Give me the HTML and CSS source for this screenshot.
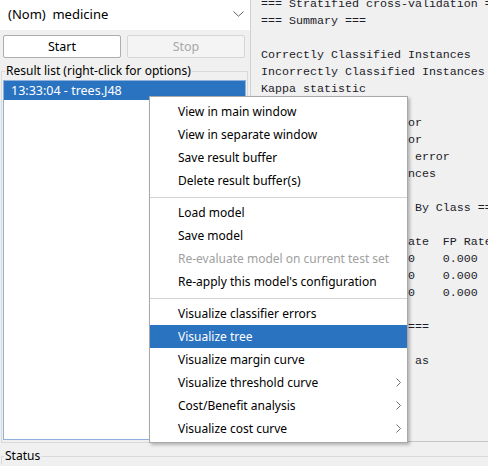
FILE: index.html
```html
<!DOCTYPE html>
<html>
<head>
<meta charset="utf-8">
<link rel="stylesheet" href="styles.css">
</head>
<body>
<div class="app">
  <div class="main">
    <div class="left">
      <div class="combo">
        <span class="combo-text">(Nom)&nbsp; medicine</span>
        <svg class="combo-arrow" width="11" height="6" viewBox="0 0 11 6"><path d="M0.5 0.5 L5.5 5.2 L10.5 0.5" fill="none" stroke="#606060" stroke-width="1"/></svg>
      </div>
      <div class="buttons">
        <button class="btn">Start</button>
        <button class="btn btn-disabled">Stop</button>
      </div>
      <fieldset class="group">
        <legend class="group-title">Result list (right-click for options)</legend>
        <div class="list">
          <div class="list-item list-item-sel">13:33:04 - trees.J48</div>
        </div>
      </fieldset>
    </div>
    <div class="right">
      <pre class="output">=== Stratified cross-validation ===
=== Summary ===

Correctly Classified Instances          22              100      %
Incorrectly Classified Instances         0                0      %
Kappa statistic                          1
Mean absolute error                      0
Root mean squared error                  0
Relative absolute error                  0      %
Root relative squared error              0      %
Total Number of Instances               22

=== Detailed Accuracy By Class ===

                 TP Rate  FP Rate  Precision  Recall   F-Measure
                 1.000    0.000    1.000      1.000    1.000
                 1.000    0.000    1.000      1.000    1.000
Weighted Avg.    1.000    0.000    1.000      1.000    1.000

=== Confusion Matrix ===

  a  b &lt;-- classified as
 12  0 |  a = yes
  0 10 |  b = no
</pre>
    </div>
  </div>
  <fieldset class="status">
    <legend class="status-title">Status</legend>
  </fieldset>

  <div class="menu">
    <div class="menu-item">View in main window</div>
    <div class="menu-item">View in separate window</div>
    <div class="menu-item">Save result buffer</div>
    <div class="menu-item">Delete result buffer(s)</div>
    <div class="menu-sep"></div>
    <div class="menu-item">Load model</div>
    <div class="menu-item">Save model</div>
    <div class="menu-item menu-item-disabled">Re-evaluate model on current test set</div>
    <div class="menu-item">Re-apply this model's configuration</div>
    <div class="menu-sep"></div>
    <div class="menu-item">Visualize classifier errors</div>
    <div class="menu-item menu-item-active">Visualize tree</div>
    <div class="menu-item">Visualize margin curve</div>
    <div class="menu-item">Visualize threshold curve<svg class="sub-arrow" width="5" height="9" viewBox="0 0 5 9"><path d="M0.5 0.5 L4.5 4.5 L0.5 8.5" fill="none" stroke="#707070" stroke-width="1"/></svg></div>
    <div class="menu-item">Cost/Benefit analysis<svg class="sub-arrow" width="5" height="9" viewBox="0 0 5 9"><path d="M0.5 0.5 L4.5 4.5 L0.5 8.5" fill="none" stroke="#707070" stroke-width="1"/></svg></div>
    <div class="menu-item">Visualize cost curve<svg class="sub-arrow" width="5" height="9" viewBox="0 0 5 9"><path d="M0.5 0.5 L4.5 4.5 L0.5 8.5" fill="none" stroke="#707070" stroke-width="1"/></svg></div>
  </div>
</div>
</body>
</html>
```
FILE: styles.css
```css
html, body {
  margin: 0;
  padding: 0;
  background: #f0f0f0;
  width: 488px;
  height: 466px;
  overflow: hidden;
}

.app {
  position: relative;
  width: 488px;
  height: 466px;
  overflow: hidden;
  font-family: "Noto Sans", "Liberation Sans", sans-serif;
  font-size: 12px;
  color: #000;
}

.main {
  display: flex;
  height: 443px;
}

.left {
  width: 250px;
  display: flex;
  flex-direction: column;
}

.combo {
  height: 30px;
  background: #fff;
  display: flex;
  align-items: center;
  justify-content: space-between;
  padding: 0 6px 0 8px;
  box-sizing: border-box;
}

.combo-text {
  font-size: 13px;
  white-space: pre;
  margin-top: -2px;
}

.combo-arrow {
  margin-top: -3px;
}

.buttons {
  display: flex;
  gap: 6px;
  padding: 5px 5px 0 3px;
}

.btn {
  flex: 1;
  height: 23px;
  background: #fff;
  border: 1px solid #adadad;
  border-radius: 2px;
  font-family: inherit;
  font-size: 12.5px;
  color: #000;
  padding: 0;
}

.btn-disabled {
  background: #f4f4f4;
  border-color: #d6d6d6;
  color: #a8a8a8;
}

.group {
  margin: 5px 2px 0 1px;
  padding: 0 1px 2px 1px;
  border: 1px solid #d9d9d9;
  flex: 1;
  display: flex;
  flex-direction: column;
  min-height: 0;
}

.group-title {
  padding: 0 1px;
  margin-left: 2px;
  font-size: 12px;
  line-height: 16px;
}

.list {
  flex: 1;
  background: #fff;
  border: 1px solid #8fb0dc;
  margin-top: 1px;
}

.list-item {
  height: 19px;
  line-height: 19px;
  padding-left: 7px;
  font-size: 12.5px;
}

.list-item-sel {
  background: #2a73c0;
  color: #fff;
}

.right {
  flex: 1;
  border-left: 1px solid #d0d0d0;
  border-bottom: 1px solid #c6c6c6;
  margin-bottom: 1px;
  overflow: hidden;
}

.output {
  margin: -4px 0 0 0;
  padding: 0 0 0 10px;
  font-family: "Liberation Mono", monospace;
  font-size: 11.67px;
  line-height: 17px;
  color: #1c1c2a;
}

.status {
  margin: 5px 0 0 1px;
  padding: 0;
  border: 1px solid #d9d9d9;
  border-right: none;
  border-bottom: none;
  height: 8px;
  box-sizing: content-box;
}

.status-title {
  padding: 0 1px;
  margin-left: 2px;
  font-size: 12px;
  line-height: 16px;
}

.menu {
  position: absolute;
  left: 149px;
  top: 96px;
  width: 259px;
  box-sizing: border-box;
  background: #fff;
  border: 1px solid #a8a8a8;
  padding: 3px 0 2px 0;
  box-shadow: 2px 2px 3px rgba(0, 0, 0, 0.25);
}

.menu-item {
  position: relative;
  height: 23px;
  line-height: 23px;
  padding-left: 28px;
  font-size: 12px;
  white-space: nowrap;
}

.menu-item-disabled {
  color: #a0a0a0;
}

.menu-item-active {
  background: #2a73c0;
  color: #fff;
}

.menu-sep {
  height: 9px;
  display: flex;
  align-items: center;
}

.menu-sep::after {
  content: "";
  flex: 1;
  height: 1px;
  background: #d4d4d4;
  margin-top: 1px;
}

.sub-arrow {
  position: absolute;
  right: 6px;
  top: 7px;
}
```
